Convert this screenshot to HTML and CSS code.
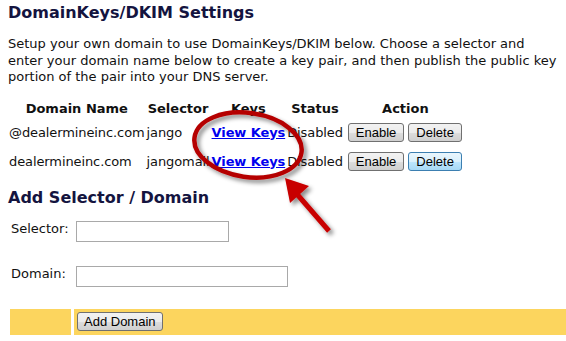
FILE: index.html
```html
<!DOCTYPE html>
<html lang="en">
  <head>
    <meta charset="utf-8">
    <title>DomainKeys/DKIM Settings</title>
    <link rel="stylesheet" href="styles.css">
  </head>
  <body>
  <div class="page">
      <h2>DomainKeys/DKIM Settings</h2>
      <p class="intro">Setup your own domain to use DomainKeys/DKIM below. Choose a selector and enter your domain name below to create a key pair, and then publish the public key portion of the pair into your DNS server.</p>

      <table class="keys">
          <tr>
              <th>Domain Name</th>
              <th>Selector</th>
              <th>Keys</th>
              <th>Status</th>
              <th>Action</th>
          </tr>
          <tr>
              <td>@dealermineinc.com</td>
              <td>jango</td>
              <td><a href="#">View Keys</a></td>
              <td>Disabled</td>
              <td class="actions"><button>Enable</button><button>Delete</button></td>
          </tr>
          <tr class="row2">
              <td>dealermineinc.com</td>
              <td>jangomail</td>
              <td><a href="#">View Keys</a></td>
              <td>Disabled</td>
              <td class="actions"><button>Enable</button><button class="hover">Delete</button></td>
          </tr>
      </table>

      <h2 class="sub">Add Selector / Domain</h2>
      <div class="add-form">
          <label for="sel" class="topic">Selector:</label>
          <div class="field"><input type="text" id="sel" class="short"></div>
          <label for="dom" class="topic">Domain:</label>
          <div class="field"><input type="text" id="dom" class="long"></div>
          <div class="bar"></div>
          <div class="bar"><button>Add Domain</button></div>
      </div>

      <!-- callout drawn over the table -->
      <svg class="callout" width="566" height="341" viewBox="0 0 566 341">
          <defs>
              <filter id="shadow" x="-20%" y="-20%" width="140%" height="140%">
                  <feDropShadow dx="3" dy="3" stdDeviation="2" flood-color="#000" flood-opacity="0.45"/>
              </filter>
          </defs>
          <g filter="url(#shadow)">
              <ellipse cx="248" cy="145" rx="54" ry="32" transform="rotate(8 248 145)" fill="none" stroke="#b50000" stroke-width="4.5"/>
              <line x1="329" y1="231" x2="296" y2="193" stroke="#c80000" stroke-width="5"/>
              <polygon points="285,178 309,186 290,203" fill="#c80000"/>
          </g>
      </svg>
  </div>
  </body>
</html>
```

FILE: styles.css
```css
body {
    margin: 0;
    font-family: "DejaVu Sans", Verdana, sans-serif;
    font-size: 13px;
    color: #111;
    background-color: #ffffff;
}

.page {
    position: relative;
    padding: 0 0 0 8px;
    height: 341px;
    overflow: hidden;
}

h2 {
    font-size: 16px;
    font-weight: bold;
    color: #14143f;
    margin: 0;
    padding-top: 3px;
    line-height: 20px;
}

.intro {
    margin: 13px 8px 0 0;
    line-height: 16.5px;
}

/* domain table */
.keys {
    border-collapse: collapse;
    margin-top: 12px;
}
.keys th {
    padding: 3px 1px 3px;
    font-weight: bold;
}
.keys td {
    padding: 4px 1px;
    white-space: nowrap;
    letter-spacing: -0.1px;
}
.keys .row2 td {
    padding-top: 6px;
}
.keys a {
    color: #0000ee;
    font-weight: bold;
}
.actions {
    padding-left: 4px !important;
}

button {
    font-family: "Liberation Sans", Arial, sans-serif;
    font-size: 13px;
    color: #000;
    height: 19px;
    padding: 0 7px;
    margin-right: 4px;
    border: 1px solid #707070;
    border-radius: 3px;
    background: linear-gradient(#f2f2f2 0%, #ebebeb 50%, #dddddd 51%, #cfcfcf 100%);
}
button.hover {
    border-color: #3c7fb1;
    background: linear-gradient(#eaf6fd 0%, #d9f0fc 50%, #bee6fd 51%, #a7d9f5 100%);
}

.sub {
    margin-top: 10px;
}

/* add selector form */
.add-form {
    display: grid;
    grid-template-columns: 61px 1fr;
    grid-template-rows: 45px 43px 26px;
    column-gap: 3px;
    margin: 13px 0 0 2px;
    align-items: start;
}
.topic {
    padding: 0 0 0 1px;
}
.field {
    padding-left: 2px;
}
input[type="text"] {
    height: 21px;
    box-sizing: border-box;
    border: 1px solid #a9a9a9;
    padding: 2px;
    margin: 0;
}
.short {
    width: 153px;
}
.long {
    width: 212px;
}
.bar {
    background-color: #fcd55e;
    height: 26px;
    display: flex;
    align-items: center;
    padding-left: 3px;
}
.bar button {
    height: 19px;
    padding: 0 6px;
}

.callout {
    position: absolute;
    left: 0;
    top: 0;
    pointer-events: none;
}
```
